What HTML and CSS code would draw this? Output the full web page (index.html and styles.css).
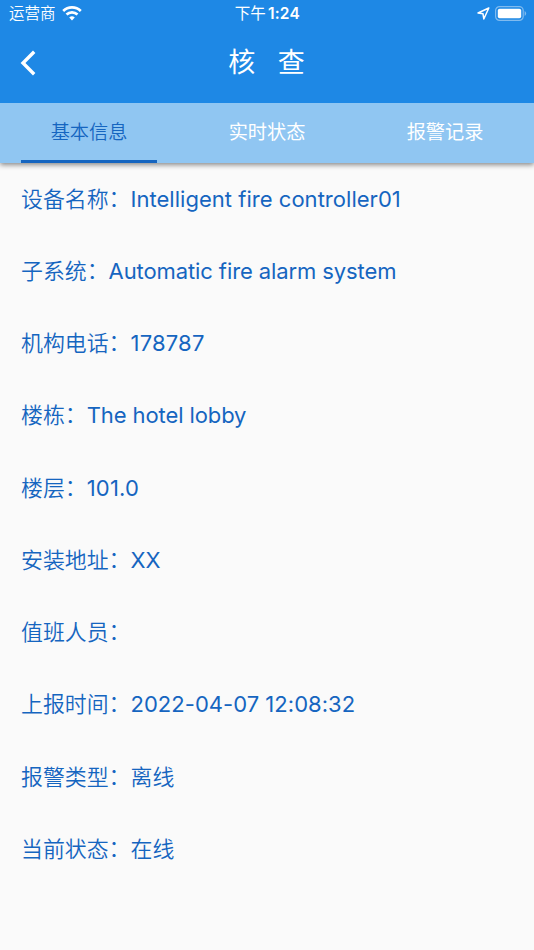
FILE: index.html
```html
<!DOCTYPE html>
<html lang="zh-CN">
<head>
<meta charset="utf-8">
<title>核查</title>
<link rel="stylesheet" href="styles.css">
</head>
<body>
<header class="header">
  <div class="status">
    <div class="carrier"><span>运营商</span>
      <svg class="wifi" viewBox="0 0 20 15"><path d="M10 14.6 7.2 11.6a4.2 4.2 0 0 1 5.6 0z"/><path class="arc" d="M4.5 8.6a8 8 0 0 1 11 0M1.2 5a12.7 12.7 0 0 1 17.6 0"/></svg>
    </div>
    <div class="clock">下午<b>1:24</b></div>
    <div class="power">
      <svg class="location" viewBox="0 0 13 13"><path d="M11.8 1 1 6l5 .8.8 5.2z"/></svg>
      <svg class="battery" viewBox="0 0 32 15"><rect class="shell" x=".6" y=".6" width="27.6" height="13.8" rx="4"/><rect class="charge" x="2.8" y="2.8" width="23.4" height="9.4" rx="1.8"/><path class="tip" d="M29.6 5q1.5.8 1.5 2.5T29.6 10z"/></svg>
    </div>
  </div>
  <div class="titlebar">
    <svg class="back" viewBox="0 0 16 26"><path d="M14.2 1.8 3 13l11.2 11.2"/></svg>
    <h1 class="title"><span>核</span><span>查</span></h1>
  </div>
</header>
<nav class="tabs">
  <div class="tab active">基本信息</div><div class="tab">实时状态</div><div class="tab">报警记录</div>
</nav>
<main class="details">
  <p class="row"><span class="label">设备名称<span class="colon">：</span></span><span class="value">Intelligent fire controller01</span></p>
  <p class="row"><span class="label">子系统<span class="colon">：</span></span><span class="value compact">Automatic fire alarm system</span></p>
  <p class="row"><span class="label">机构电话<span class="colon">：</span></span><span class="value number">178787</span></p>
  <p class="row"><span class="label">楼栋<span class="colon">：</span></span><span class="value compact">The hotel lobby</span></p>
  <p class="row"><span class="label">楼层<span class="colon">：</span></span><span class="value number">101.0</span></p>
  <p class="row"><span class="label">安装地址<span class="colon">：</span></span><span class="value compact">XX</span></p>
  <p class="row"><span class="label">值班人员<span class="colon">：</span></span></p>
  <p class="row"><span class="label">上报时间<span class="colon">：</span></span><span class="value">2022-04-07 12:08:32</span></p>
  <p class="row"><span class="label">报警类型<span class="colon">：</span></span><span class="label">离线</span></p>
  <p class="row"><span class="label">当前状态<span class="colon">：</span></span><span class="label">在线</span></p>
</main>
</body>
</html>
```
FILE: styles.css
```css
* { box-sizing: border-box; }
body { margin: 0; height: 950px; overflow: hidden; background: #fafafa; font-family: Inter, "Noto Sans CJK SC", sans-serif; }
.header { position: relative; z-index: 1; height: 103px; background: #1e88e5; color: #fff; }
.status { height: 28px; display: grid; grid-template-columns: 1fr auto 1fr; align-items: center; padding: 0 7px 0 9px; font-size: 15.5px; line-height: 28px; }
.carrier, .power { display: flex; align-items: center; }
.carrier { gap: 6px; font-weight: 350; }
.wifi { width: 20px; height: 15px; margin-top: -1px; fill: #fff; }
.arc { fill: none; stroke: #fff; stroke-width: 2.7; }
.clock { margin-right: 1px; }
.clock b { font-weight: 600; margin-left: 2px; letter-spacing: .25px; }
.power { justify-content: flex-end; gap: 5px; margin-top: -1px; }
.location { width: 13px; height: 13px; fill: none; stroke: #fff; stroke-width: 1.5; stroke-linejoin: round; }
.battery { width: 32px; height: 15px; }
.shell { fill: none; stroke: #80bbef; stroke-width: 1.2; }
.charge { fill: #fff; }
.tip { fill: #80bbef; }
.titlebar { height: 70px; display: grid; grid-template-columns: 40px 1fr 40px; align-items: center; padding: 0 20px; }
.back { width: 16px; height: 26px; margin-top: -1px; fill: none; stroke: #fff; stroke-width: 3.4; }
.title { margin: 0 1px 0 0; display: flex; justify-content: center; gap: 22.5px; font-size: 27px; font-weight: 400; line-height: 40px; }
.tabs { height: 60px; display: grid; grid-template-columns: repeat(3, 1fr); background: #90c6f2; box-shadow: 0 2px 5px rgba(0,0,0,.45); }
.tab { margin: 0 21px; padding-top: 1px; text-align: center; color: #fff; font-size: 19.2px; line-height: 56px; border-bottom: 3px solid transparent; }
.active { color: #1565c0; border-color: #1565c0; font-weight: 350; }
.details { margin-top: -.4px; padding: 0 21px; color: #1565c0; font-size: 22px; }
.row { margin: 0; height: 72.28px; line-height: 72px; display: flex; white-space: nowrap; }
.label { font-size: 21.9px; font-weight: 350; }
.colon { position: relative; top: -1px; }
.value { letter-spacing: .03px; }
.compact { letter-spacing: -.1px; }
.number { letter-spacing: .2px; }
```
